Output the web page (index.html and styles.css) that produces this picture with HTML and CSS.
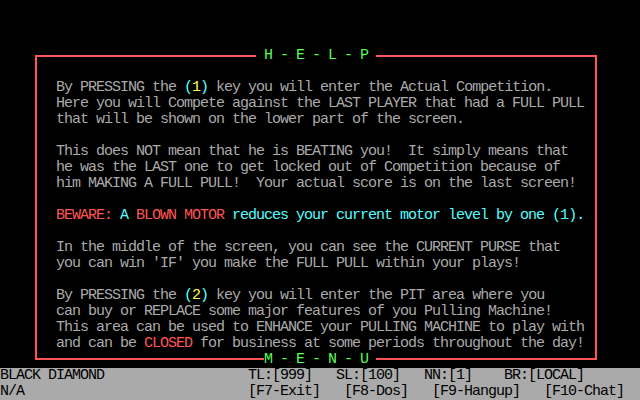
FILE: index.html
```html
<!DOCTYPE html>
<html>
<head>
<meta charset="utf-8">
<link rel="stylesheet" href="styles.css">
</head>
<body>
<div class="screen">
  <div class="main">
    <div class="box">
      <div class="edge edge-top">
        <span class="ln ln-tl"></span><span class="ttl"> H - E - L - P </span><span class="ln ln-tr"></span>
      </div>
      <div class="content">
        <div class="row"></div>
        <div class="row">By PRESSING the <span class="cy">(</span><span class="yl">1</span><span class="cy">)</span> key you will enter the Actual Competition.</div>
        <div class="row">Here you will Compete against the LAST PLAYER that had a FULL PULL</div>
        <div class="row">that will be shown on the lower part of the screen.</div>
        <div class="row"></div>
        <div class="row">This does NOT mean that he is BEATING you!  It simply means that</div>
        <div class="row">he was the LAST one to get locked out of Competition because of</div>
        <div class="row">him MAKING A FULL PULL!  Your actual score is on the last screen!</div>
        <div class="row"></div>
        <div class="row"><span class="rd">BEWARE:</span><span class="cy"> A </span><span class="rd">BLOWN MOTOR</span><span class="cy"> reduces your current motor level by one (1).</span></div>
        <div class="row"></div>
        <div class="row">In the middle of the screen, you can see the CURRENT PURSE that</div>
        <div class="row">you can win 'IF' you make the FULL PULL within your plays!</div>
        <div class="row"></div>
        <div class="row">By PRESSING the <span class="cy">(</span><span class="yl">2</span><span class="cy">)</span> key you will enter the PIT area where you</div>
        <div class="row">can buy or REPLACE some major features of you Pulling Machine!</div>
        <div class="row">This area can be used to ENHANCE your PULLING MACHINE to play with</div>
        <div class="row">and can be <span class="rd">CLOSED</span> for business at some periods throughout the day!</div>
      </div>
      <div class="edge edge-bottom">
        <span class="ln ln-bl"></span><span class="ttl">M - E - N - U </span><span class="ln ln-br"></span>
      </div>
    </div>
  </div>
  <div class="status">
    <div class="srow srow-a"><span>BLACK DIAMOND</span><span>TL:[999]</span><span>SL:[100]</span><span>NN:[1]</span><span>BR:[LOCAL]</span></div>
    <div class="srow srow-b"><span>N/A</span><span>[F7-Exit]</span><span>[F8-Dos]</span><span>[F9-Hangup]</span><span>[F10-Chat]</span></div>
  </div>
</div>
</body>
</html>
```
FILE: styles.css
```css
html, body {
  margin: 0;
  padding: 0;
  background: #000;
}

.screen {
  width: 640px;
  height: 400px;
  background: #000;
  display: flex;
  flex-direction: column;
  overflow: hidden;
  font-family: "Liberation Mono", "DejaVu Sans Mono", monospace;
  font-size: 15px;
  letter-spacing: -1px;
  line-height: 16px;
  color: #aaaaaa;
  white-space: pre;
}

.main {
  height: 368px;
  padding-top: 16px;
  box-sizing: border-box;
}

.box {
  margin-left: 35px;
  width: 562px;
  display: flex;
  flex-direction: column;
}

.edge {
  height: 16px;
  display: flex;
}

.edge-top { align-items: flex-end; }
.edge-bottom { align-items: flex-start; }

.ttl {
  color: #55ff55;
  height: 16px;
  align-self: stretch;
}

.ln {
  flex: 1;
  box-sizing: border-box;
  border: 0 solid #ff5555;
}

.ln-tl { height: 9px; border-top-width: 2px; border-left-width: 2px; }
.ln-tr { height: 9px; border-top-width: 2px; border-right-width: 2px; }
.ln-bl { height: 8px; border-bottom-width: 2px; border-left-width: 2px; flex: 0 0 229px; }
.ln-br { height: 8px; border-bottom-width: 2px; border-right-width: 2px; }

.content {
  border-left: 2px solid #ff5555;
  border-right: 2px solid #ff5555;
  padding-left: 19px;
  display: flex;
  flex-direction: column;
}

.row {
  height: 16px;
}

.cy { color: #55ffff; }
.yl { color: #ffff55; }
.rd { color: #ff5555; }

.status {
  height: 32px;
  background: #aaaaaa;
  color: #000;
  display: flex;
  flex-direction: column;
}

.srow {
  height: 16px;
  display: grid;
}

.srow-a { grid-template-columns: 248px 88px 88px 80px auto; }
.srow-b { grid-template-columns: 248px 96px 88px 112px auto; }
```
